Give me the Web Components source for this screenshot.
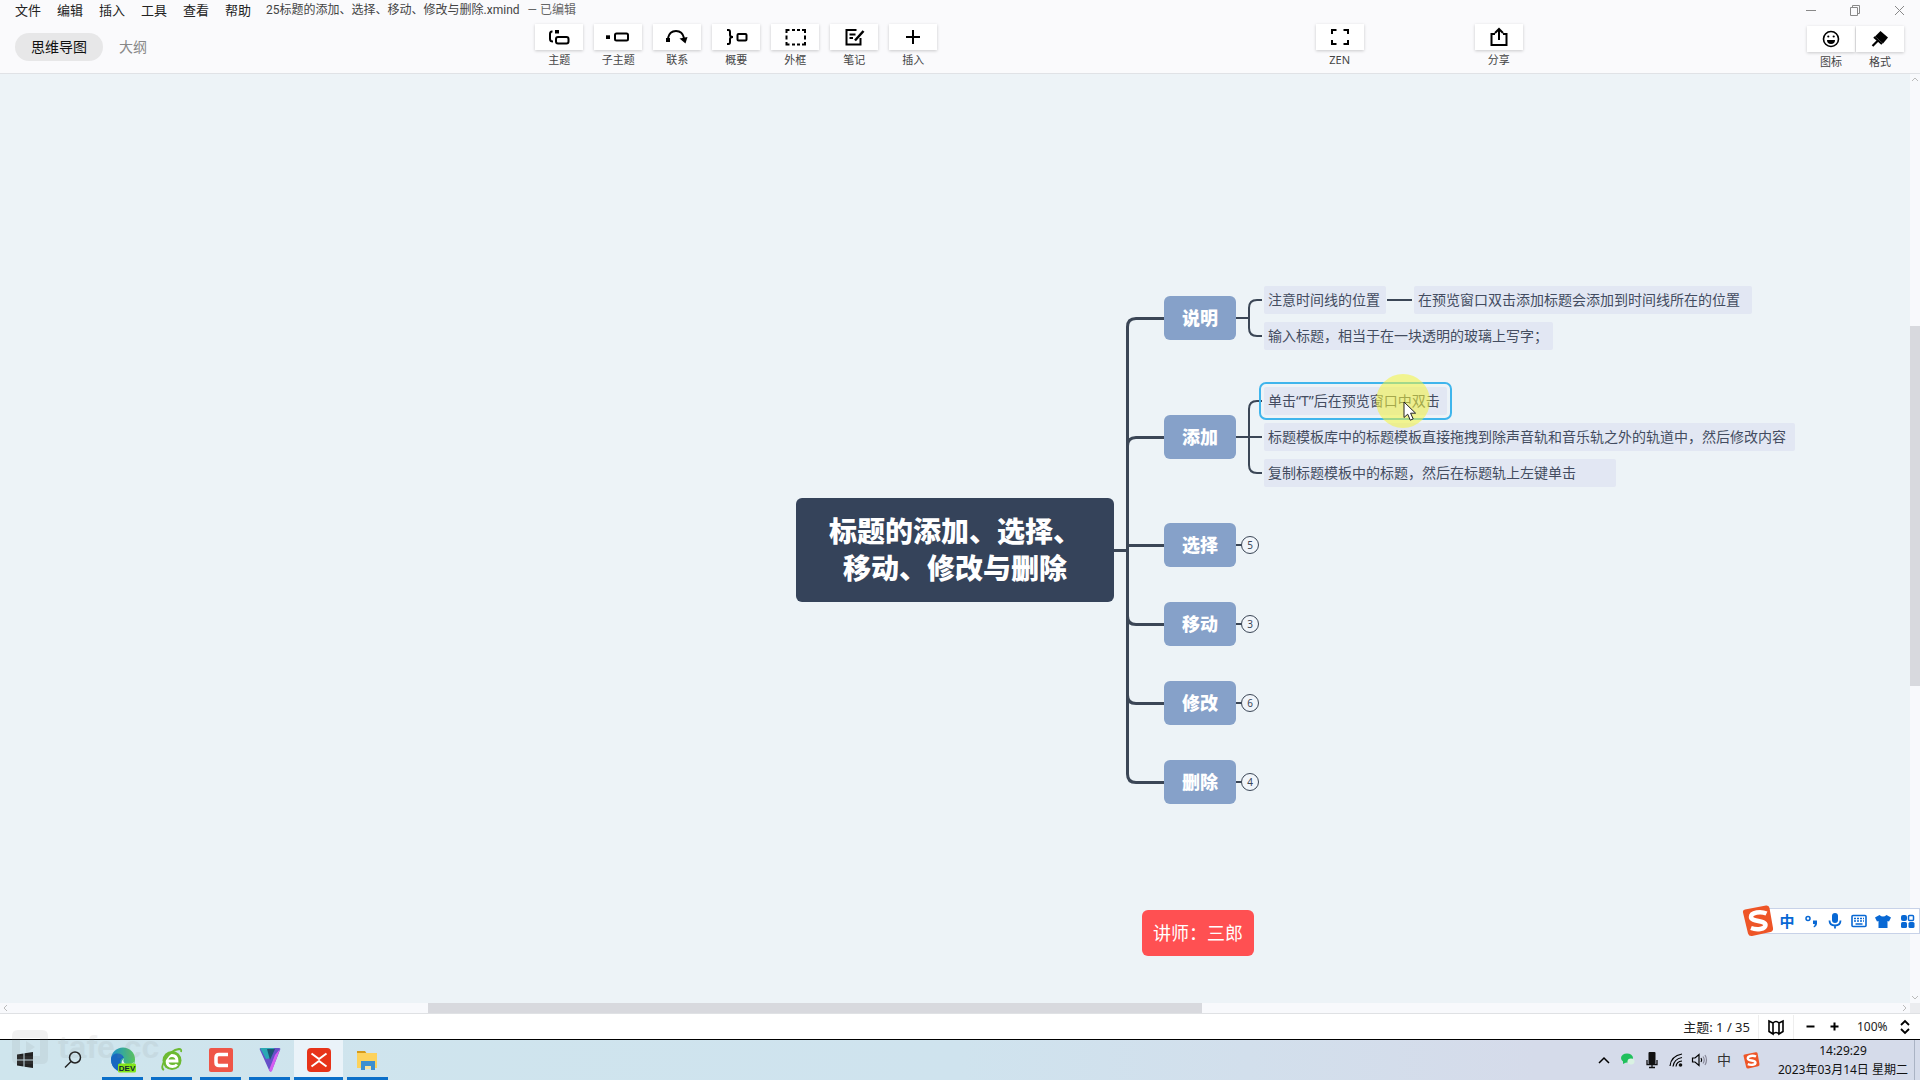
<!DOCTYPE html>
<html lang="zh-CN">
<head>
<meta charset="utf-8">
<title>25标题的添加、选择、移动、修改与删除.xmind</title>
<style>
html, body { margin: 0; height: 100%; }
body { font-family: "Noto Sans", "Noto Sans CJK SC", sans-serif; overflow: hidden; }
</style>
</head>
<body>
<mind-app></mind-app>
<script>
const BASE = `*{box-sizing:border-box}
button{all:unset;box-sizing:border-box;cursor:default}
svg{display:block;flex:none}`;

function define(name, css, html, setup) {
  const tpl = document.createElement('template');
  customElements.define(name, class extends HTMLElement {
    constructor() {
      super();
      this.attachShadow({ mode: 'open' });
    }
    connectedCallback() {
      if (this.shadowRoot.childNodes.length) return;
      tpl.innerHTML = `<style>${BASE}${css}</style>` + (typeof html === 'function' ? html(this) : html);
      this.shadowRoot.append(tpl.content.cloneNode(true));
      if (setup) setup(this);
    }
  });
}

const svg = (inner, size = 24, box = 24) =>
  `<svg width="${size}" height="${size}" viewBox="0 0 ${box} ${box}" fill="none" stroke="#000" stroke-width="2" aria-hidden="true">${inner}</svg>`;

const ICONS = {
  topic: svg('<path d="M5.500 6.500H5Q3 6.500 3 9v5q0 2.500 3 2.500"/><rect x="9" y="12" width="12.500" height="6.500" rx="2"/><path d="M8 5h4v3.500H8z" fill="#000" stroke="none"/>'),
  sub: svg('<path d="M0 10.300h4v3.700H0z" fill="#000" stroke="none"/><rect x="9" y="8.500" width="13" height="7" rx="1.500"/>'),
  relation: svg('<path d="M1 13h4v4H1z" fill="#000" stroke="none"/><path d="M3 13C5 3.500 17 3.500 19 13"/><path d="M14.500 13.500L22.500 12l-2 6.500z" fill="#000" stroke="none"/>'),
  summary: svg('<path d="M3 5h1.500Q6 5 6 7v3q0 2 3 2-3 0-3 2v3q0 2-1.500 2H3"/><rect x="13.500" y="9" width="9" height="6.500" rx="1"/>'),
  boundary: svg('<path d="M3.500 8V5h3M19 5h3v3M22 17v2.500h-3M6.500 19.500h-3V17M9 5h3M14 5h3M9 19.500h3M14 19.500h3M3.500 10.500v4M22 10.500v4"/>'),
  note: svg('<path d="M14.500 5H4.500v14.500h14V13M7.500 9.500h6M7.500 13h3.500"/><path d="M21.500 6L13 15.500" stroke-width="2.500"/>'),
  plus: svg('<path d="M12 5v14M5 12h14"/>'),
  zen: svg('<path d="M4 9V5H8.500M15.500 5H20v4M20 15v4h-4.500M8.500 19H4v-4"/>'),
  share: svg('<path d="M8 9H4.500v11h15V9H16M12 15V4M8 8l4-4 4 4"/>'),
  face: svg('<circle cx="12" cy="12" r="7.500" stroke-width="1.600"/><path d="M8 13h8a4 4 0 01-8 0z" fill="#000" stroke="none"/><circle cx="9.300" cy="9.500" r="1.100" fill="#000" stroke="none"/><circle cx="14.700" cy="9.500" r="1.100" fill="#000" stroke="none"/>'),
  brush: svg('<path d="M12.500 4l7.500 6.500-5 6-8-7z" fill="#000" stroke="none"/><path d="M6 10l8 7M10 13.500L4.500 19" stroke-width="2.200"/>'),
};

define('menu-bar', `
:host{display:flex;align-items:flex-start;height:24px;padding-left:15px;font-size:13px;line-height:20px;color:#222}
nav{display:flex;gap:16px}
.doc{margin-left:15px;font-family:Roboto,"Noto Sans CJK SC",sans-serif;font-size:12px;color:#444;display:flex;gap:8px}
.doc span:last-child{color:#666}
.win{margin-left:auto;display:flex;gap:24px;padding-right:11px}
.win svg{stroke:#888;stroke-width:1}
`, `<nav><button>文件</button><button>编辑</button><button>插入</button><button>工具</button><button>查看</button><button>帮助</button></nav>
<div class="doc"><span>25标题的添加、选择、移动、修改与删除.xmind</span><span>— 已编辑</span></div>
<div class="win">
<button aria-label="minimize"><svg width="20" height="20" fill="none"><path d="M5 10.500h10"/></svg></button>
<button aria-label="restore"><svg width="20" height="20" fill="none"><path d="M5.500 7.500h7v8h-7zM7.500 7.500v-2h7v8h-2"/></svg></button>
<button aria-label="close"><svg width="20" height="20" fill="none"><path d="M6 6l9 9M15 6l-9 9"/></svg></button>
</div>`);

define('tool-button', `
:host{display:block;width:48px}
button{display:flex;flex-direction:column;align-items:center;width:100%}
.box{display:flex;justify-content:center;align-items:center;width:100%;height:26px;background:#fff;box-shadow:0 1px 3px #0003}
.label{margin-top:2px;font-size:11px;line-height:16px;color:#444;white-space:nowrap}
`, el => `<button><span class="box">${ICONS[el.getAttribute('icon')]}</span><span class="label"><slot></slot></span></button>`);

define('tool-bar', `
:host{display:flex;align-items:flex-start;height:50px;padding:0 16px 0 15px;border-bottom:1px solid #e0e2e6}
.tabs{display:flex;padding-top:9px}
.tabs button{height:28px;padding:0 16px;border-radius:14px;font-size:14px;line-height:28px;color:#888}
.tabs .on{background:#e7e7e8;color:#111}
.group{display:flex;gap:11px}
.solo{display:flex;gap:111px}
.panel{display:flex;gap:1px;padding-top:2px}
.a{flex:372}.b{flex:378}.c{flex:284}
`, `<div class="tabs"><button class="on">思维导图</button><button>大纲</button></div><div class="a"></div>
<div class="group"><tool-button icon="topic">主题</tool-button><tool-button icon="sub">子主题</tool-button><tool-button icon="relation">联系</tool-button><tool-button icon="summary">概要</tool-button><tool-button icon="boundary">外框</tool-button><tool-button icon="note">笔记</tool-button><tool-button icon="plus">插入</tool-button></div>
<div class="b"></div>
<div class="solo"><tool-button icon="zen">ZEN</tool-button><tool-button icon="share">分享</tool-button></div>
<div class="c"></div>
<div class="panel"><tool-button icon="face">图标</tool-button><tool-button icon="brush">格式</tool-button></div>`);

/* A topic on the map: x / y give its top left corner, w its width. */
define('map-topic', `
:host{position:absolute;display:flex;align-items:center;white-space:nowrap}
:host([kind=root]){justify-content:center;text-align:center;height:104px;border-radius:6px;background:#35435a;color:#fff;font-size:28px;font-weight:900;line-height:37px}
:host([kind=branch]){justify-content:center;height:44px;border-radius:6px;background:#86a1c9;color:#fff;font-size:18px;font-weight:900;line-height:26px}
:host([kind=leaf]){height:28px;padding-left:4px;border-radius:2px;background:#e2e7f3;color:#434c60;font-size:14px;line-height:20px}
:host([kind=note]){justify-content:center;height:46px;border-radius:6px;background:#ff5052;color:#fff;font-size:18px;line-height:26px}
:host([kind=count]){justify-content:center;height:18px;border:1px solid #3b4656;border-radius:9px;background:#f1f5fa;color:#3b4656;font-size:10px;line-height:16px}
:host([selected]){outline:2px solid #3fb5ec;outline-offset:3px}
`, '<slot></slot>', el => {
  el.style.left = el.getAttribute('x') + 'px';
  el.style.top = el.getAttribute('y') + 'px';
  el.style.width = el.getAttribute('w') + 'px';
});

define('map-links', `
:host{position:absolute;inset:0}
svg{width:100%;height:100%;fill:none;stroke:#3b4656}
`, `<svg aria-hidden="true"><g stroke-width="3">
<path d="M1114 476.500h13M1164 244.500h-28q-8.500 0-8.500 8.500v447q0 8.500 8.500 8.500h28M1164 363.500h-28q-8.500 0-8.500 8.500M1127.500 471.500H1164M1127.500 542q0 8.500 8.500 8.500h28M1127.500 621q0 8.500 8.500 8.500h28"/></g>
<g stroke-width="2"><path d="M1236 244h13M1262 226h-5q-8 0-8 8v20q0 8 8 8h5M1387 226h25M1236 363h26M1262 327h-5q-8 0-8 8v56q0 8 8 8h5M1236 471h6M1236 550h6M1236 629h6M1236 708h6"/></g></svg>`);

define('map-pointer', `
:host{position:absolute;left:1376px;top:300px;width:54px;height:54px;border-radius:50%;background:#f4f43c8c}
svg{position:absolute;left:27px;top:27px}
`, `<svg width="16" height="22" aria-hidden="true"><path d="M1 1v15.500l3.700-3.300 2.600 6 2.900-1.300-2.600-5.700h5z" fill="#fff" stroke="#222"/></svg>`);

const SOGOU = size => `<svg width="${size}" height="${size}" viewBox="0 0 32 32" aria-hidden="true"><path d="M1 7.500Q.500 5 3 4.500L24 .500q3-.500 3.500 2.500L31 23q.500 3-2.500 4L10 31q-3 .500-4-2.500z" fill="#ee5527"/><path d="M24.500 8.500C19 6 9 7 9 12c0 5 14.500 3 14.500 8 0 4.500-9 5-14.500 3" fill="none" stroke="#fff" stroke-width="4.500"/></svg>`;

define('ime-bar', `
:host{position:absolute;right:0;top:831px;display:flex;align-items:center;height:32px}
.logo{z-index:1}
.keys{display:flex;align-items:center;height:26px;margin-left:-16px;padding-left:16px;background:#fff;border:1px solid #c8d2e8}
button{display:flex;justify-content:center;align-items:center;width:24px;height:24px;fill:#0868d4;stroke:none;color:#0868d4;font-size:15px;font-weight:700;line-height:20px}
`, `<span class="logo">${SOGOU(32)}</span><span class="keys">
<button>中</button>
<button aria-label="punctuation"><svg width="18" height="18"><circle cx="6" cy="6.500" r="2" fill="none" stroke="#0868d4" stroke-width="1.500"/><path d="M11 8.500h4V12q-.500 3-3 3.500l-.500-1q1.300-.800 1.300-2.500H11z"/></svg></button>
<button aria-label="voice"><svg width="18" height="18"><rect x="6" y="1" width="6" height="10" rx="3"/><path d="M3.500 8.500q0 5 5.500 5t5.500-5M9 13.500v3" fill="none" stroke="#0868d4" stroke-width="1.800"/></svg></button>
<button aria-label="keyboard"><svg width="18" height="18" fill="none" stroke="#0868d4"><rect x="2" y="3.500" width="14" height="11" rx="1" stroke-width="1.600"/><path d="M4 6.500h10M4 9h10" stroke-width="1.500" stroke-dasharray="2 1"/><path d="M5.500 12h7" stroke-width="1.500"/></svg></button>
<button aria-label="skin"><svg width="18" height="18"><path d="M5.500 3q3.500 3 7 0L17 5.500 15 9.500l-1.500-.500V16h-9V9L3 9.500 1 5.500z"/></svg></button>
<button aria-label="toolbox"><svg width="18" height="18"><rect x="3" y="3" width="6" height="6" rx="2"/><rect x="10.500" y="3.500" width="5" height="5" rx="1" fill="none" stroke="#0868d4" stroke-width="1.500"/><rect x="3" y="10" width="6" height="6" rx="1.500"/><rect x="10.500" y="10" width="6" height="6" rx="1.500"/></svg></button></span>`);

define('scroll-track', `
:host{display:flex;align-items:stretch;background:#f8f9fc}
:host([dir=v]){flex-direction:column;width:10px}
:host([dir=h]){height:10px}
i{background:#d8d9de}
svg{stroke:#bbb;stroke-width:1;fill:none}
`, el => {
  const [a, b, c] = el.getAttribute('parts').split(' ');
  const v = el.getAttribute('dir') === 'v';
  const arrow = d => `<svg width="10" height="10"><path d="${d}"/></svg>`;
  return arrow(v ? 'M2 7l3-3 3 3' : 'M7 2L4 5l3 3') + `<b style="flex:${a}"></b><i style="flex:${b}"></i><b style="flex:${c}"></b>` + arrow(v ? 'M2 3l3 3 3-3' : 'M3 2l3 3-3 3');
});

define('map-canvas', `
:host{position:relative;display:flex;flex-direction:column;min-height:0;background:#edf3f7}
.row{flex:1;display:flex;min-height:0}
.view{position:relative;flex:1;overflow:hidden}
.foot{display:flex}
.foot scroll-track{flex:1}
.corner{width:10px;background:#ebecef}
`, `<div class="row"><div class="view">
<map-links></map-links>
<map-topic kind="root" x="796" y="424" w="318"><span>标题的添加、选择、<br>移动、修改与删除</span></map-topic>
<map-topic kind="branch" x="1164" y="222" w="72">说明</map-topic>
<map-topic kind="branch" x="1164" y="341" w="72">添加</map-topic>
<map-topic kind="branch" x="1164" y="449" w="72">选择</map-topic>
<map-topic kind="branch" x="1164" y="528" w="72">移动</map-topic>
<map-topic kind="branch" x="1164" y="607" w="72">修改</map-topic>
<map-topic kind="branch" x="1164" y="686" w="72">删除</map-topic>
<map-topic kind="count" x="1241" y="462" w="18">5</map-topic>
<map-topic kind="count" x="1241" y="541" w="18">3</map-topic>
<map-topic kind="count" x="1241" y="620" w="18">6</map-topic>
<map-topic kind="count" x="1241" y="699" w="18">4</map-topic>
<map-topic kind="leaf" x="1264" y="212" w="122">注意时间线的位置</map-topic>
<map-topic kind="leaf" x="1414" y="212" w="338">在预览窗口双击添加标题会添加到时间线所在的位置</map-topic>
<map-topic kind="leaf" x="1264" y="248" w="289">输入标题，相当于在一块透明的玻璃上写字；</map-topic>
<map-topic kind="leaf" x="1264" y="313" w="183" selected>单击“T”后在预览窗口中双击</map-topic>
<map-topic kind="leaf" x="1264" y="349" w="531">标题模板库中的标题模板直接拖拽到除声音轨和音乐轨之外的轨道中，然后修改内容</map-topic>
<map-topic kind="leaf" x="1264" y="385" w="352">复制标题模板中的标题，然后在标题轨上左键单击</map-topic>
<map-topic kind="note" x="1142" y="836" w="112">讲师：三郎</map-topic>
<map-pointer></map-pointer>
</div><scroll-track dir="v" parts="242 360 307"></scroll-track></div>
<div class="foot"><scroll-track dir="h" parts="418 774 698"></scroll-track><span class="corner"></span></div>
<ime-bar></ime-bar>`);

define('status-bar', `
:host{display:flex;align-items:center;justify-content:flex-end;height:26px;background:#fff;border-top:1px solid #dfe1e4;color:#222;font-size:13px;line-height:20px}
.count{padding-right:8px}
.map{display:flex;width:36px;height:24px;align-items:center;justify-content:center;border:solid #eee;border-width:0 1px}
.step{width:24px;height:24px;display:flex;align-items:center;justify-content:center}
.minus{margin-left:4px}
.zoom{position:relative;display:flex;align-items:center;margin-left:11px;width:63px}
select{appearance:none;border:0;margin:0;padding:0;background:none;width:63px;font:12px/20px "Noto Sans","Noto Sans CJK SC",sans-serif;color:#222}
.zoom svg{position:absolute;right:7px;top:2px;pointer-events:none}
`, `<span class="count">主题: 1 / 35</span>
<button class="map" aria-label="map">${svg('<path d="M2 3l4 2v11l-4-2.500zM6 5q3-3 6 0M6 16q3-3 6 0M12 5l4-2v10.500L12 16zM6 5v11M12 5v11" stroke-width="1.600"/>', 18, 18)}</button>
<button class="step minus" aria-label="zoom out">${svg('<path d="M1.500 5.500h8"/>', 11, 11)}</button>
<button class="step" aria-label="zoom in">${svg('<path d="M1.500 5.500h8M5.500 1.500v8"/>', 11, 11)}</button>
<label class="zoom"><select aria-label="zoom"><option>100%</option></select>${svg('<path d="M4 6l4-4 4 4M4 10l4 4 4-4" stroke-width="1.800"/>', 16, 16)}</label>`);

define('task-item', `
:host{display:block;width:49px;height:40px}
button{position:relative;display:flex;align-items:center;justify-content:center;width:100%;height:100%}
:host([open]) button::after{content:"";position:absolute;left:4px;right:4px;bottom:0;height:3px;background:#0b6fc9}
:host([active]) button{background:#eaf3f9}
:host([active]) button::after{left:0;right:0}
`, el => `<button aria-label="${el.getAttribute('name')}">${APPS[el.getAttribute('name')]}</button>`);

const APPS = {
  start: '<svg width="18" height="18"><path d="M1 3.500l6.500-1v6H1zM8.500 2.300L17 1v7.500H8.500zM1 9.500h6.500v6L1 14.500zM8.500 9.500H17V17l-8.500-1.300z" fill="#222"/></svg>',
  search: '<svg width="20" height="20" fill="none" stroke="#222" stroke-width="1.500"><circle cx="11" cy="7.500" r="5.500"/><path d="M7 11.500l-6 6"/></svg>',
  edge: '<svg width="26" height="26"><defs><linearGradient id="a" x2="1"><stop stop-color="#1c8fd0"/><stop offset="1" stop-color="#57c65b"/></linearGradient></defs><circle cx="13" cy="12.500" r="12" fill="url(#a)"/><path d="M1 12C2 5 12 5 14 11c-5 0-5 7 1 11-2 2-5 3-8 1.500Q1 20 1 12z" fill="#1867c0"/><path d="M14 11q-2 4 2 6 6 1 8-2-2 7-8 8-8-6-2-12z" fill="#e4f1f7"/><rect x="8" y="16.500" width="18" height="9" rx="1.500" fill="#84e619"/><text x="17" y="24" text-anchor="middle" font-family="Liberation Sans" font-weight="700" font-size="8" fill="#123">DEV</text></svg>',
  browser: '<svg width="26" height="26" fill="none"><circle cx="13" cy="13.500" r="9.500" fill="#6cba32"/><path d="M8 14h10q0-5.500-5-5.500T8 14q0 5.500 5.500 5.500 3 0 4.500-2" stroke="#fff" stroke-width="2.800"/><path d="M5 23Q1 21 6 13 12 3 20 2q3 0 2 3" stroke="#6cba32" stroke-width="1.800"/></svg>',
  camtasia: '<svg width="26" height="26"><rect x="1" y="1" width="24" height="24" rx="2" fill="#ef5547"/><path d="M20 7.500h-9q-3 0-3 3v5q0 3 3 3h9" fill="none" stroke="#fff" stroke-width="3.500"/></svg>',
  vpn: '<svg width="26" height="26"><path d="M3 3q-1-2 1-2h18q2 0 1 2l-8 20q-1.500 3-3 0z" fill="#6650c8"/><path d="M3 1h14l-3 10-5 1z" fill="#2aa8b4"/><path d="M23 2l-8 22q-1.500 2-3-1l6-15z" fill="#d45cf0"/><path d="M10 2l8 0-5 11z" fill="#1c5573"/></svg>',
  xmind: '<svg width="26" height="26"><rect x="1" y="1" width="24" height="24" rx="4" fill="#e73319"/><path d="M5.500 6.500L13 12l7.500-5.500M5.500 19.500L13 14l7.500 5.500" fill="none" stroke="#fff" stroke-width="2"/></svg>',
  files: '<svg width="26" height="26"><path d="M2 4h8l2 3H2z" fill="#d59b1c"/><path d="M2 6h20v15H2z" fill="#fdd25c"/><path d="M6 14h14v9h-4v-4h-6v4H6z" fill="#3d8fd0"/><path d="M10 19h6v3h-6z" fill="#fbe29a"/></svg>',
};

define('task-bar', `
:host{position:relative;display:flex;height:41px;border-top:1px solid #000;background:linear-gradient(90deg,#cfe5ed,#cfe3ee 50%,#d5dbea 80%)}
.tray{display:flex;align-items:center;margin-left:auto}
.tray button{width:24px;display:flex;justify-content:center;font-size:14px;line-height:20px;color:#333}
.tray button:last-child{margin-left:4px}
.clock{display:flex;flex-direction:column;align-items:center;justify-content:center;margin-left:14px;padding-right:6px;border-right:1px solid #aab3c4;height:40px;font-size:12px;line-height:19px;color:#111;white-space:nowrap}
.end{width:5px}
.mark{position:absolute;left:12px;top:-10px;display:flex;align-items:center;gap:10px;color:#888;opacity:.11;font:700 32px/34px "Liberation Sans",sans-serif;pointer-events:none}
`, `<task-item name="start"></task-item><task-item name="search"></task-item><task-item name="edge" open></task-item><task-item name="browser" open></task-item><task-item name="camtasia" open></task-item><task-item name="vpn" open></task-item><task-item name="xmind" open active></task-item><task-item name="files" open></task-item>
<div class="tray">
<button aria-label="more">${svg('<path d="M3 11l5-5 5 5" stroke-width="1.500"/>', 16, 16)}</button>
<button aria-label="wechat"><svg width="16" height="16"><ellipse cx="7" cy="6" rx="6" ry="4.500" fill="#20c05c"/><path d="M3 8v4l4-2z" fill="#20c05c"/><ellipse cx="11" cy="9.500" rx="3.500" ry="3" fill="#d9f2e2"/></svg></button>
<button aria-label="microphone"><svg width="16" height="18"><rect x="4.500" y="1" width="7" height="12" rx="1" fill="#111"/><path d="M3 9v4.500h10V9M8 13v3M5 16.500h6" fill="none" stroke="#111" stroke-width="1.300"/></svg></button>
<button aria-label="network">${svg('<path d="M2 14Q3 4 14 2M5 14.500Q6 7 14 5.500M8 14.500q.500-5 6-5.500" stroke-width="1.200"/><circle cx="12.500" cy="13" r="1.800" fill="#111" stroke="none"/>', 16, 16)}</button>
<button aria-label="volume">${svg('<path d="M1.500 6H4l4-3.500v11L4 10H1.500zM10 6q1.500 2 0 4" stroke-width="1.200"/><path d="M12 4.500q2.500 3.500 0 7M14 3q3 5 0 10" stroke="#889" stroke-width="1.200"/>', 17, 17)}</button>
<button>中</button>
<button aria-label="ime">${SOGOU(17)}</button>
</div>
<button class="clock"><span>14:29:29</span><span>2023年03月14日 星期二</span></button><span class="end"></span>
<div class="mark"><svg width="36" height="34"><path fill-rule="evenodd" d="M6 0h24q6 0 6 6v22q0 6-6 6H6q-6 0-6-6V6q0-6 6-6zM8 8v18h20V8zM14 11l9 6-9 6z" fill="#888"/></svg><span>tafe.cc</span></div>`);

define('mind-app', `
:host{display:flex;flex-direction:column;height:100vh;background:#fafafc}
map-canvas{flex:1}
`, `<menu-bar></menu-bar><tool-bar></tool-bar><map-canvas></map-canvas><status-bar></status-bar><task-bar></task-bar>`);
</script>
</body>
</html>
